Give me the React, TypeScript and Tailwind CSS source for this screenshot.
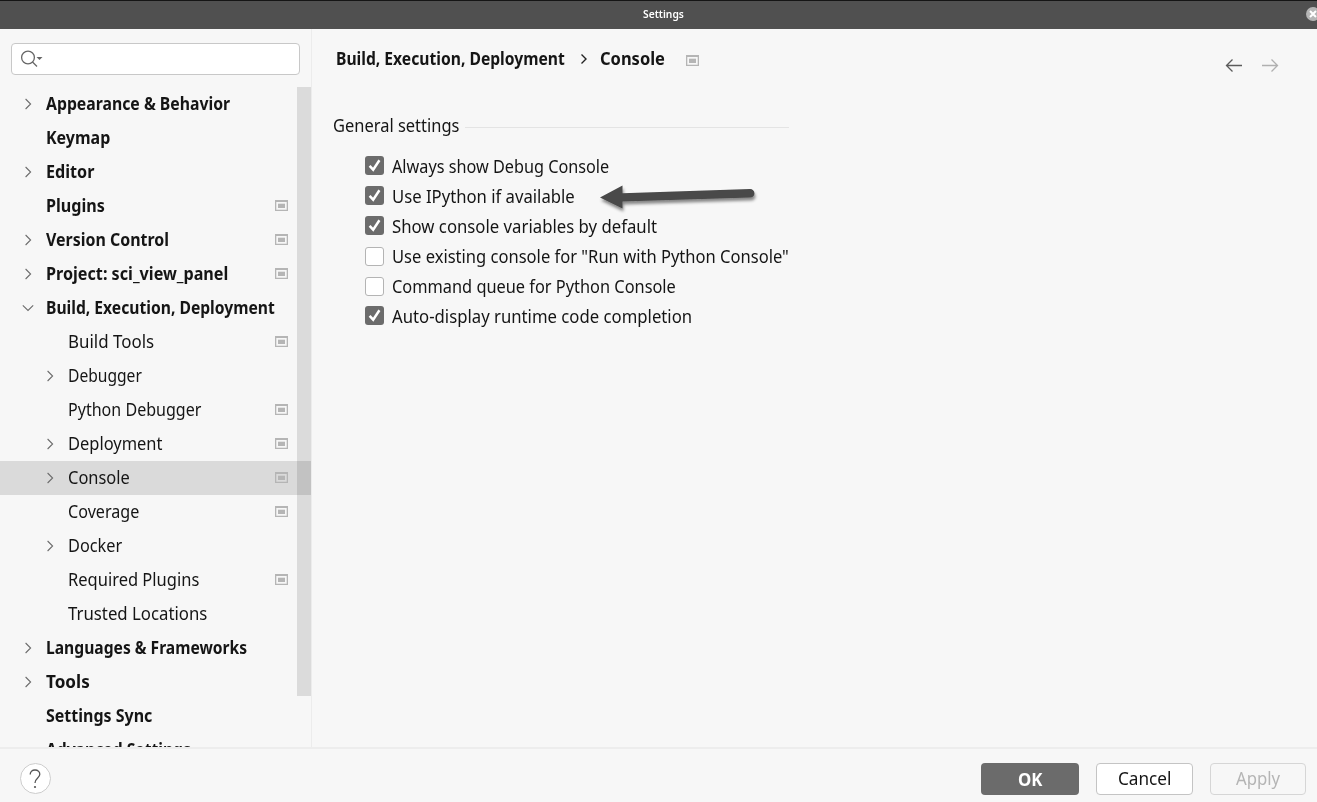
import { useLayoutEffect, useRef, useState } from "react";

type FitProps = { text: string; width: number; className?: string };

/* Single-line label condensed to an exact advance width. */
function Fit({ text, width, className = "" }: FitProps) {
  const ref = useRef<HTMLSpanElement>(null);
  const [scale, setScale] = useState(1);
  useLayoutEffect(() => {
    if (ref.current) setScale(width / ref.current.offsetWidth);
  }, [text, width]);
  return (
    <span className={`flex shrink-0 ${className}`} style={{ width }}>
      <span
        ref={ref}
        className="shrink-0 origin-left whitespace-nowrap"
        style={{ transform: `scaleX(${scale})` }}
      >
        {text}
      </span>
    </span>
  );
}

function ProjectIcon({ className = "" }: { className?: string }) {
  return (
    <svg width="13" height="11" viewBox="0 0 13 11" className={`shrink-0 ${className}`}>
      <path fill="#b5b5b5" fillRule="evenodd" d="M0 0h13v11H0zM1.300 2v7.700h10.400V2z" />
      <path fill="#b5b5b5" d="M3 3.700h7v4.300H3z" />
    </svg>
  );
}

function Chevron({ open }: { open?: boolean }) {
  return (
    <svg width="12" height="12" viewBox="0 0 12 12" fill="none" stroke="#6c6c6c" strokeWidth="1.1" className="shrink-0">
      {open ? <path d="M.8 3.4 6 8.4l5.2-5" /> : <path d="m3.6 1 5 5-5 5" />}
    </svg>
  );
}

type Item = {
  label: string;
  w: number;
  child?: boolean;
  arrow?: "closed" | "open";
  icon?: boolean;
  selected?: boolean;
};

const items: Item[] = [
  { label: "Appearance & Behavior", w: 184, arrow: "closed" },
  { label: "Keymap", w: 64 },
  { label: "Editor", w: 48, arrow: "closed" },
  { label: "Plugins", w: 59, icon: true },
  { label: "Version Control", w: 123, arrow: "closed", icon: true },
  { label: "Project: sci_view_panel", w: 182, arrow: "closed", icon: true },
  { label: "Build, Execution, Deployment", w: 229, arrow: "open" },
  { label: "Build Tools", w: 86, child: true, icon: true },
  { label: "Debugger", w: 74, child: true, arrow: "closed" },
  { label: "Python Debugger", w: 133, child: true, icon: true },
  { label: "Deployment", w: 94, child: true, arrow: "closed", icon: true },
  { label: "Console", w: 62, child: true, arrow: "closed", icon: true, selected: true },
  { label: "Coverage", w: 71, child: true, icon: true },
  { label: "Docker", w: 54, child: true, arrow: "closed" },
  { label: "Required Plugins", w: 131, child: true, icon: true },
  { label: "Trusted Locations", w: 139, child: true },
  { label: "Languages & Frameworks", w: 201, arrow: "closed" },
  { label: "Tools", w: 44, arrow: "closed" },
  { label: "Settings Sync", w: 106 },
  { label: "Advanced Settings", w: 145 },
];

function TreeRow({ item }: { item: Item }) {
  return (
    <div
      className={`flex h-[34px] shrink-0 items-center pr-6 ${item.child ? "pl-11" : "pl-[22px]"} ${
        item.selected ? "bg-[#dadada]" : ""
      }`}
    >
      <span className="flex w-6 shrink-0">
        {item.arrow && <Chevron open={item.arrow === "open"} />}
      </span>
      <Fit text={item.label} width={item.w} className={item.child ? "pb-0.5" : "pb-0.5 font-bold"} />
      {item.icon && <ProjectIcon className="mb-px ml-auto" />}
    </div>
  );
}

const options = [
  { label: "Always show Debug Console", w: 217, on: true },
  { label: "Use IPython if available", w: 183, on: true, arrow: true },
  { label: "Show console variables by default", w: 265, on: true },
  { label: 'Use existing console for "Run with Python Console"', w: 397, on: false },
  { label: "Command queue for Python Console", w: 284, on: false },
  { label: "Auto-display runtime code completion", w: 300, on: true },
];

function Checkbox({ on }: { on: boolean }) {
  return on ? (
    <span className="mb-px flex size-[19px] shrink-0 items-center justify-center rounded-[3px] bg-[#6b6b6b]">
      <svg width="19" height="19" viewBox="0 0 19 19" fill="none" stroke="#fff" strokeWidth="2.500">
        <path d="m4.600 9.800 3.600 3.900 6.200-9.400" />
      </svg>
    </span>
  ) : (
    <span className="mt-px size-[19px] shrink-0 rounded-[3px] border border-[#b4b4b4] bg-white" />
  );
}

function PointerArrow() {
  return (
    <svg width="164" height="34" viewBox="0 0 164 34" className="absolute left-[234px] top-0 overflow-visible">
      <defs>
        <filter id="soft" x="-10%" y="-40%" width="120%" height="200%">
          <feDropShadow dx="1" dy="3" stdDeviation="1.6" floodColor="#000" floodOpacity=".45" />
        </filter>
      </defs>
      <path
        filter="url(#soft)"
        fill="#484848"
        d="M1 16.500 23.500 4.500v7.700L151 8a4.300 4.300 0 0 1 .3 8.600L23.500 20.400v7z"
      />
    </svg>
  );
}

function NavArrow({ right }: { right?: boolean }) {
  return (
    <svg width="18" height="14" viewBox="0 0 18 14" fill="none" stroke={right ? "#b0b0b0" : "#5c5c5c"} strokeWidth="1.3">
      {right ? <path d="M1 6.500h15.500M10.500.5l6 6-6 6" /> : <path d="M17 6.500H1.500M7.500.5l-6 6 6 6" />}
    </svg>
  );
}

export default function App() {
  return (
    <div className="flex h-[802px] w-[1317px] flex-col overflow-hidden bg-[#f7f7f7] font-['Noto_Sans',sans-serif] text-[17.5px] leading-6 text-[#151515]">
      <header className="flex h-[29px] shrink-0 items-center border-t border-[#151515] bg-[#505050] pb-0.5 text-[10.5px] font-semibold text-white">
        <span className="w-[643px] shrink-0" />
        <Fit text="Settings" width={41} />
        <span className="flex flex-1 justify-end overflow-hidden">
          <svg width="12" height="14" viewBox="0 0 12 14" className="shrink-0">
            <circle cx="8" cy="7" r="7" fill="#b5b5b5" />
            <path d="m5 4 6 6m0-6-6 6" stroke="#fff" strokeWidth="2" />
          </svg>
        </span>
      </header>

      <div className="flex h-[718px] shrink-0">
        <aside className="flex w-[312px] shrink-0 flex-col">
          <div className="flex h-[58px] shrink-0 border-r border-[#ececec] px-[11px] pt-[14px]">
            <div className="flex h-8 w-[289px] items-center rounded-[4px] border border-[#c8c8c8] bg-white pl-2">
              <svg width="24" height="18" viewBox="0 0 24 18" fill="none" stroke="#666" strokeWidth="1.300">
                <circle cx="8" cy="7.500" r="6.400" />
                <path d="m12.500 12 4.500 4.500" />
                <path d="M16.500 7h6l-3 3z" fill="#666" stroke="none" />
              </svg>
            </div>
          </div>
          <div className="relative flex min-h-0 flex-1 flex-col overflow-hidden border-r border-[#ececec]">
            <div className="-mr-px flex flex-col">
              {items.map((item) => (
                <TreeRow key={item.label} item={item} />
              ))}
            </div>
            <div className="absolute right-0 top-0 h-[609px] w-[14px] bg-black/11" />
          </div>
        </aside>

        <main className="flex flex-1 flex-col">
          <div className="flex h-[68px] shrink-0 pl-6 pt-[18px]">
            <div className="flex h-6 items-center font-bold">
              <Fit text="Build, Execution, Deployment" width={229} className="pb-0.5" />
              <svg width="8" height="12" viewBox="0 0 8 12" fill="none" stroke="#222" strokeWidth="1.400" className="ml-[15px]">
                <path d="m1.500 1.500 4.500 4.500L1.500 10.500" />
              </svg>
              <Fit text="Console" width={65} className="ml-3 pb-0.5" />
              <ProjectIcon className="ml-[21px] mt-[3px]" />
            </div>
            <div className="ml-auto mr-[38px] mt-3 flex gap-[18px]">
              <NavArrow />
              <NavArrow right />
            </div>
          </div>
          <div className="flex h-[54px] items-start gap-[6px] pl-[21px] pt-4">
            <Fit text="General settings" width={126} />
            <span className="mt-[14px] h-px w-[324px] bg-[#e4e4e4]" />
          </div>
          <div className="flex flex-col pl-[53px]">
            {options.map((o) => (
              <div key={o.label} className="relative flex h-[30px] items-center">
                <Checkbox on={o.on} />
                <Fit text={o.label} width={o.w} className="ml-2" />
                {o.arrow && <PointerArrow />}
              </div>
            ))}
          </div>
        </main>
      </div>

      <footer className="flex h-[55px] shrink-0 border-t-2 border-[#ededed] pl-5 pr-[11px] pt-[14px]">
        <div className="flex size-[31px] items-center justify-center rounded-full border border-[#cdcdcd] bg-white pr-px">
          <svg width="12" height="20" viewBox="0 0 12 20" fill="none" stroke="#555" strokeWidth="1.300">
            <path d="M1.200 5.600C1.200 2.800 3.200 1 6 1s4.800 1.700 4.800 4.300C10.800 9 6 9 6 14" />
            <circle cx="6" cy="18" r="1.100" fill="#555" stroke="none" />
          </svg>
        </div>
        <div className="ml-auto flex gap-[17px]">
          <button className="flex h-8 w-[98px] items-center justify-center rounded-[4px] bg-[#6b6b6b] pb-px font-bold text-white">
            <Fit text="OK" width={24} />
          </button>
          <button className="flex h-8 w-[97px] items-center justify-center rounded-[4px] border border-[#c4c4c4] bg-white pb-0.5">
            <Fit text="Cancel" width={53} />
          </button>
          <button className="flex h-8 w-[96px] items-center justify-center rounded-[4px] border border-[#d6d6d6] pb-0.5 text-[#b5b5b5]">
            <Fit text="Apply" width={44} />
          </button>
        </div>
      </footer>
    </div>
  );
}
